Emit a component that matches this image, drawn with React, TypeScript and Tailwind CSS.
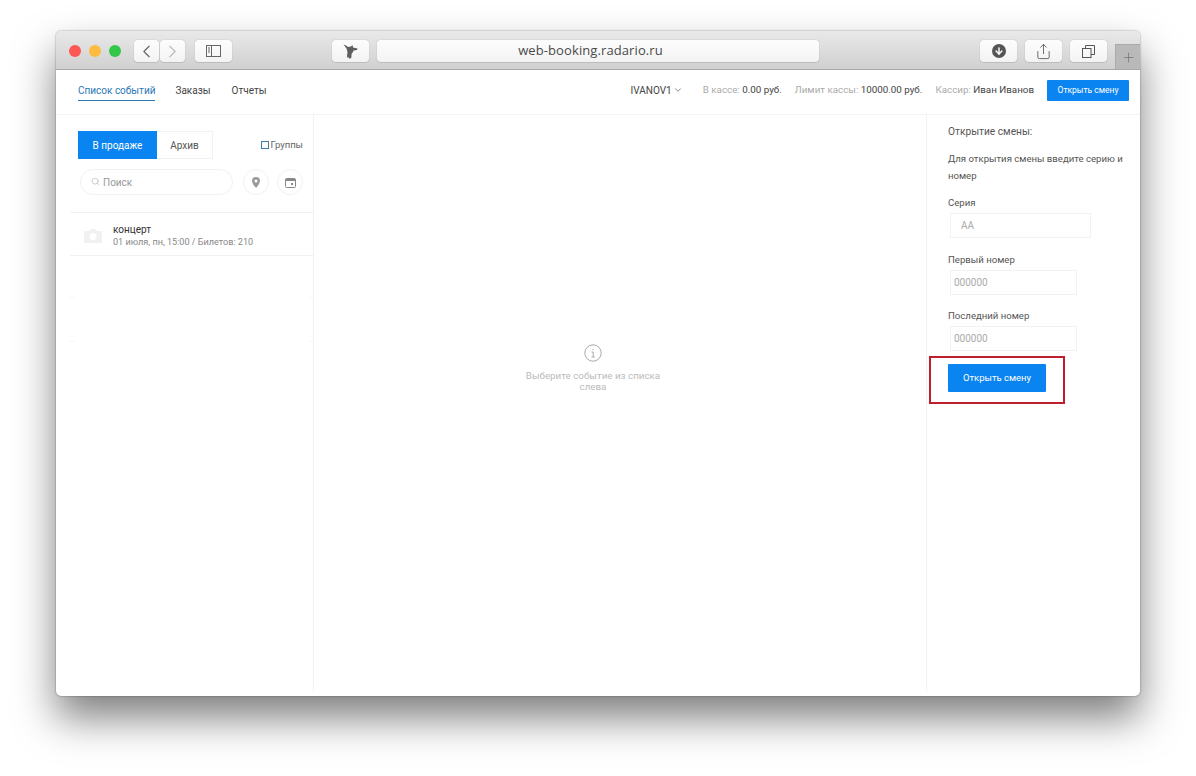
import React from 'react';
import { ChevronDown, ChevronLeft, ChevronRight, Search, Plus, ArrowDown, Share } from 'lucide-react';

const toolbarBtn = 'h-[22px] bg-gradient-to-b from-[#fdfdfd] to-[#f3f3f3] rounded-[4px] shadow-[0_0_1px_rgba(0,0,0,0.35),0_1px_0_rgba(0,0,0,0.08)] flex items-center justify-center';

const Toolbar: React.FC = () => (
  <div className="h-[39px] shrink-0 flex items-center relative pl-[13px] pt-[2px] rounded-t-[5px] border-b border-[#a8a8a8] bg-gradient-to-b from-[#e9e9e9] to-[#d0d0d0]">
    <span className="w-3 h-3 rounded-full bg-[#fc5753]" />
    <span className="w-3 h-3 rounded-full bg-[#fdbc40] ml-2" />
    <span className="w-3 h-3 rounded-full bg-[#33c748] ml-2" />
    <div className={`${toolbarBtn} w-[25px] ml-[13px]`}>
      <ChevronLeft className="w-[21px] h-[21px] text-[#666]" strokeWidth={1.4} />
    </div>
    <div className={`${toolbarBtn} w-[25px] ml-px`}>
      <ChevronRight className="w-[21px] h-[21px] text-[#bbb]" strokeWidth={1.4} />
    </div>
    <div className={`${toolbarBtn} w-[37px] ml-[10px]`}>
      <svg width="15" height="12" viewBox="0 0 15 12" fill="none" stroke="#666" strokeWidth="1">
        <rect x="0.5" y="0.5" width="14" height="11" />
        <path d="M5.5 0.5v11M2 3h2M2 5h2M2 7h2" />
      </svg>
    </div>
    <div className={`${toolbarBtn} w-[37px] ml-[100px]`}>
      <svg width="15" height="15" viewBox="0 0 15 15" fill="#5e5e5e">
        <path d="M0.5 0.5L3 1.5L5 3L8 2.5L9.5 1L10 3.5L14.5 4.5L14 6L10.5 6.5L10 8L8.5 10L8.5 13L7.5 14.5L6 14.5L5.5 13L4.5 14L4 12L4.5 8L3.5 4.5Z" />
      </svg>
    </div>
    <div className={`${toolbarBtn} w-[442px] ml-[8px] pr-[15px] text-[13px] text-[#4a4a4a] tracking-[0.1px] font-['Open_Sans',sans-serif]`}>
      web-booking.radario.ru
    </div>
    <div className={`${toolbarBtn} w-[37px] ml-[161px]`}>
      <span className="w-[14px] h-[14px] rounded-full bg-[#555] flex items-center justify-center">
        <ArrowDown className="w-[10px] h-[10px] text-white" strokeWidth={3.5} />
      </span>
    </div>
    <div className={`${toolbarBtn} w-[37px] ml-2`}>
      <Share className="w-[17px] h-[17px] text-[#555]" strokeWidth={1.2} />
    </div>
    <div className={`${toolbarBtn} w-[37px] ml-2`}>
      <svg width="13" height="13" viewBox="0 0 13 13" fill="none" stroke="#555">
        <rect x="0.5" y="3.5" width="8.5" height="9" />
        <path d="M3.5 3.5V0.5H12.5V9.5H9" />
      </svg>
    </div>
    <div className="absolute right-0 bottom-0 w-[25px] h-[25px] bg-[#b9b9b9] border-l border-t border-[#aaa] flex items-center justify-center">
      <Plus className="w-[15px] h-[15px] text-[#666]" strokeWidth={1} />
    </div>
  </div>
);

const Nav: React.FC = () => (
  <div className="h-[45px] shrink-0 flex items-center pl-[22px] pr-[11px] pb-[4px] border-b border-[#f3f3f3] text-[10px]">
    <div className="text-[#2b78b5] border-b border-[#2b78b5] h-[20px] leading-[19px] mt-px">Список событий</div>
    <div className="text-[#444] ml-[20px]">Заказы</div>
    <div className="text-[#444] ml-[21px]">Отчеты</div>
    <div className="ml-auto flex items-center text-[#444]">
      IVANOV1
      <ChevronDown className="w-[10px] h-[10px] ml-px" strokeWidth={1.5} />
    </div>
    <div className="ml-[20px] text-[#aaa] text-[9.8px]">В кассе: <span className="text-[#444]">0.00 руб.</span></div>
    <div className="ml-[13px] text-[#aaa] text-[9.8px]">Лимит кассы: <span className="text-[#444]">10000.00 руб.</span></div>
    <div className="ml-[13px] text-[#aaa] text-[9.8px]">Кассир: <span className="text-[#444]">Иван Иванов</span></div>
    <button className="ml-[13px] w-[82px] h-[21px] bg-[#0a84f0] text-white text-[8.5px] rounded-[1px]">Открыть смену</button>
  </div>
);

const Stub: React.FC = () => (
  <div className="flex justify-between h-px">
    <span className="w-[4px] bg-[#f5f5f5]" />
    <span className="w-[3px] bg-[#f5f5f5]" />
  </div>
);

const EventsColumn: React.FC = () => (
  <div className="w-[244px] ml-[14px] shrink-0 border-r border-[#f1f1f1]">
    <div className="flex items-center mt-4 pl-2 pr-[10px]">
      <div className="w-[79px] h-[28px] pt-px bg-[#0a84f0] text-white text-[10px] flex items-center justify-center">В продаже</div>
      <div className="w-[56px] h-[28px] pt-px border border-[#f2f2f2] border-l-0 text-[#555] text-[10px] flex items-center justify-center">Архив</div>
      <label className="ml-auto flex items-center text-[9.5px] text-[#666]">
        <span className="w-2 h-2 border border-[#3d7ea6] mr-[2px]" />
        Группы
      </label>
    </div>
    <div className="flex items-center mt-[10px] pl-[10px] pr-[10px]">
      <div className="w-[153px] h-[26px] pt-px rounded-full border border-[#f2f2f2] flex items-center pl-[10px] text-[10px] text-[#999]">
        <Search className="w-[9px] h-[9px] text-[#aaa] mr-[3px] -mt-[3px]" strokeWidth={1.5} />
        Поиск
      </div>
      <div className="w-[26px] h-[26px] ml-[10px] rounded-full border border-[#f2f2f2] flex items-center justify-center">
        <svg width="8" height="11" viewBox="0 0 8 11">
          <path fillRule="evenodd" fill="#999" d="M4 0a4 4 0 0 1 4 4c0 2.5-2.5 5-4 7c-1.500-2-4-4.500-4-7a4 4 0 0 1 4-4zM4 2.500a1.500 1.500 0 1 0 0 3a1.500 1.500 0 0 0 0-3z" />
        </svg>
      </div>
      <div className="w-[26px] h-[26px] ml-2 rounded-full border border-[#f2f2f2] flex items-center justify-center">
        <svg width="11" height="11" viewBox="0 0 11 11" fill="none" stroke="#888">
          <rect x="0.5" y="1.500" width="10" height="9" rx="1" />
          <path d="M0.5 3h10" strokeWidth="2" />
          <rect x="6" y="6" width="2" height="2" fill="#888" stroke="none" />
        </svg>
      </div>
    </div>
    <div className="h-[44px] mt-[17px] border-y border-[#f1f1f1] flex items-center pl-[14px]">
      <svg width="18" height="14" viewBox="0 0 18 14" className="mt-[3px]">
        <path fillRule="evenodd" fill="#f1f1f1" d="M1 2h4l1.500-2h5L13 2h4a1 1 0 0 1 1 1v10a1 1 0 0 1-1 1H1a1 1 0 0 1-1-1V3a1 1 0 0 1 1-1zM9 4a3.500 3.500 0 1 0 0 7a3.500 3.500 0 0 0 0-7z" />
      </svg>
      <div className="ml-[11px] pt-[3px]">
        <div className="text-[10px] leading-[13px] text-[#333]">концерт</div>
        <div className="text-[9.1px] leading-[13px] text-[#888]">01 июля, пн, 15:00 / Билетов: 210</div>
      </div>
    </div>
    <div className="mt-[41px]"><Stub /></div>
    <div className="mt-[43px]"><Stub /></div>
  </div>
);

const EmptyState: React.FC = () => (
  <div className="flex-1 flex flex-col items-center pt-[229px] pr-[54px]">
    <svg width="18" height="18" viewBox="0 0 18 18" fill="none" stroke="#aaa">
      <circle cx="9" cy="9" r="8.200" />
      <path d="M7.500 8h1.700v5M7.500 13h3.200M9 5v1.200" />
    </svg>
    <div className="w-[150px] mt-[8px] text-center text-[9.8px] leading-[11px] text-[#bbb]">
      Выберите событие из списка слева
    </div>
  </div>
);

const fieldCls = 'block ml-[2px] h-[25px] border border-[#f2f2f2] text-[10px] outline-none placeholder:text-[#aaa]';

const ShiftForm: React.FC = () => (
  <div className="w-[208px] shrink-0 mr-[6px] border-l border-[#f1f1f1] pl-[21px] text-[9.6px] text-[#555]">
    <div className="mt-[10px] leading-[13px] text-[10.2px]">Открытие смены:</div>
    <div className="mt-[12px] leading-[17px]">Для открытия смены введите серию и номер</div>
    <div className="mt-[12px] leading-[13px]">Серия</div>
    <input className={`${fieldCls} mt-[4px] w-[141px] pl-[10px]`} placeholder="АА" />
    <div className="mt-[15px] leading-[13px]">Первый номер</div>
    <input className={`${fieldCls} mt-[4px] w-[127px] pl-[3px]`} placeholder="000000" />
    <div className="mt-[14px] leading-[13px]">Последний номер</div>
    <input className={`${fieldCls} mt-[4px] w-[127px] pl-[3px]`} placeholder="000000" />
    <div className="w-fit -ml-[19px] mt-[5px] border-2 border-[#bf1e2e] pl-[17px] pr-[17px] pt-[6px] pb-[10px]">
      <button className="block w-[98px] h-[28px] pt-px bg-[#0a84f0] text-white text-[9.5px] rounded-[1px]">Открыть смену</button>
    </div>
  </div>
);

export default function App() {
  return (
    <div className="w-[1196px] h-[776px] overflow-hidden bg-white pt-[31px] pl-[56px] font-['Roboto',sans-serif]">
      <div className="w-[1084px] h-[665px] flex flex-col bg-white rounded-[5px] shadow-[0_0_2px_rgba(0,0,0,0.45),0_22px_40px_rgba(0,0,0,0.5)]">
        <Toolbar />
        <Nav />
        <div className="flex-1 flex mb-[5px]">
          <EventsColumn />
          <EmptyState />
          <ShiftForm />
        </div>
      </div>
    </div>
  );
}
